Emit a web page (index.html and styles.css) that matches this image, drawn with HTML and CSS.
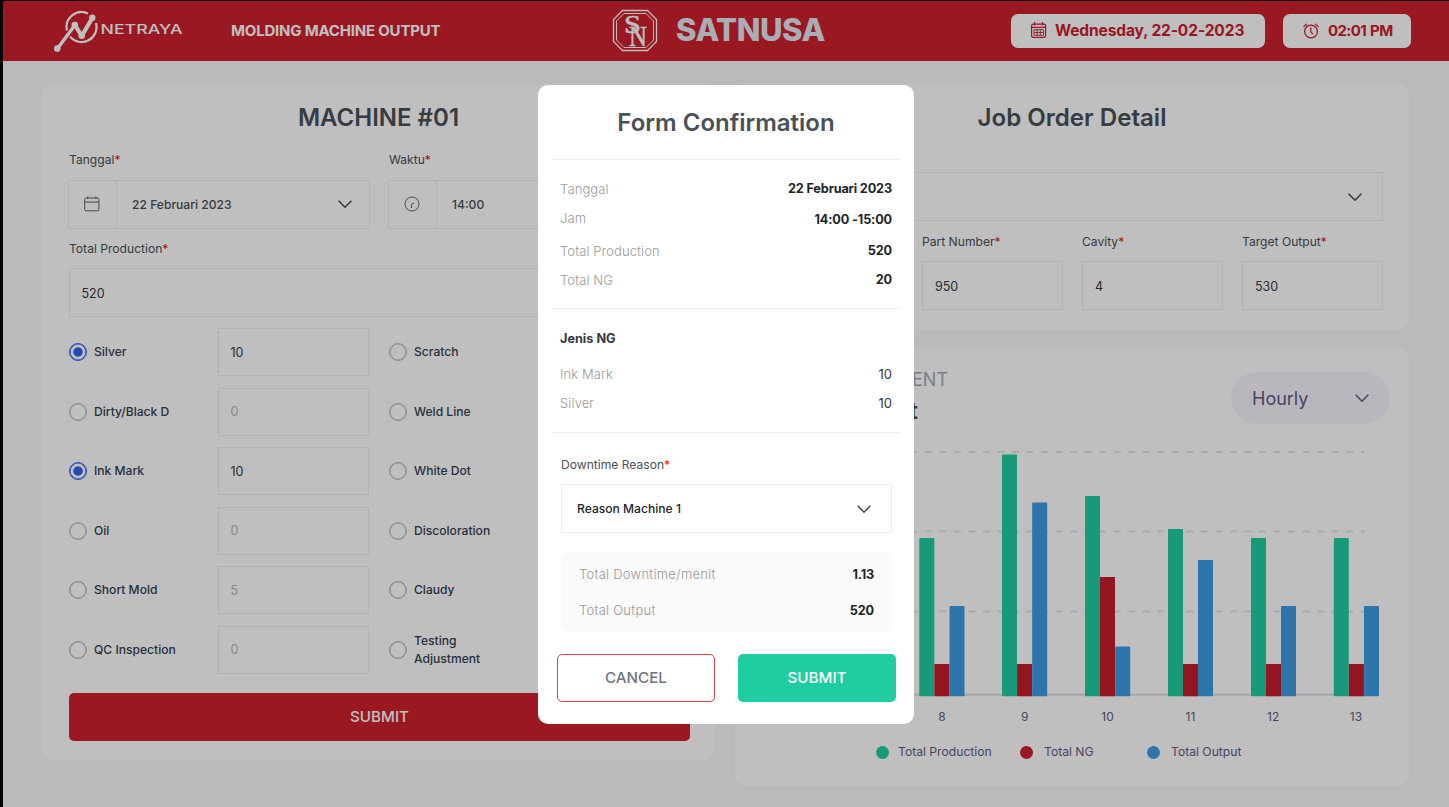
FILE: index.html
```html
<!DOCTYPE html>
<html lang="id">
<head>
<meta charset="utf-8">
<title>Molding Machine Output</title>
<link rel="stylesheet" href="styles.css">
</head>
<body>
<svg width="0" height="0" class="defs">
  <symbol id="chev" viewBox="0 0 14 8"><path d="M.6.8 7 7.2 13.4.8" fill="none" stroke="currentColor" stroke-width="1.5"/></symbol>
</svg>
<div class="app">
  <header class="topbar">
    <svg class="netraya" width="132" height="44" viewBox="52 9 132 44">
      <g fill="none" stroke="#fff">
        <path d="M67 30.500A15 15 0 0 1 88 13.5M96 23A15 15 0 0 1 70 36.600" stroke-width="2.200"/>
        <path d="M57.5 48.5 75 25" stroke-width="3.4"/>
        <path d="M75 25 81.7 36 92.300 18" stroke-width="4.2" stroke-linejoin="round"/>
      </g>
      <g fill="#fff"><circle cx="57.3" cy="48.6" r="3.3"/><circle cx="74.800" cy="25" r="3.3"/><circle cx="81.7" cy="35.8" r="3.2"/><circle cx="92.300" cy="17.8" r="3.2"/></g>
      <text x="100.5" y="33.500" textLength="82" lengthAdjust="spacingAndGlyphs" class="netraya-name">NETRAYA</text>
    </svg>
    <div class="app-name">MOLDING MACHINE OUTPUT</div>
    <div class="company">
      <svg width="46" height="44" viewBox="612 9 46 44">
        <g fill="none" stroke="#fff"><path d="M622.5 10.5h25l9 9v22l-9 9h-25l-9-9v-22z" stroke-width="1.3"/><path d="M624 13.5h22l7.500 7.500v19l-7.500 7.500h-22l-7.500-7.500v-19z" stroke-width="1"/></g>
        <text x="624" y="33" textLength="17" lengthAdjust="spacingAndGlyphs" class="seal seal-s">S</text><text x="629" y="45.700" textLength="18" lengthAdjust="spacingAndGlyphs" class="seal seal-n">N</text>
      </svg>
      <span>SATNUSA</span>
    </div>
    <div class="chip chip-date">
      <svg width="16" height="17" viewBox="0 0 16 17" fill="none" stroke="#cc212d"><rect x=".6" y="2.200" width="14" height="13.200" rx="1.600" stroke-width="1.200"/><path d="M.6 5.300h14M3.700 0v3.500M11.500 0v3.500" stroke-width="1.300"/><path d="M3 7.700h9.500v5.600H3zM3 10.500h9.500M6.200 7.700v5.600M9.300 7.700v5.600" stroke-width=".9"/></svg>
      <span>Wednesday, 22-02-2023</span>
    </div>
    <div class="chip chip-time">
      <svg width="16" height="16" viewBox="0 0 16 16" fill="none" stroke="#cc212d" stroke-width="1.200"><circle cx="8" cy="8.500" r="6.400"/><path d="M7.800 4.800v4l2 2M.8 3.600 3.500 1.200M12.500 1.200l2.700 2.400" stroke-linecap="round"/></svg>
      <span>02:01 PM</span>
    </div>
  </header>

  <main class="columns">
    <section class="card machine">
      <h2>MACHINE #01</h2>
      <div class="pair">
        <div>
          <label>Tanggal<i>*</i></label>
          <div class="field with-icon"><span class="cell"><svg width="16" height="16" viewBox="0 0 16 16" fill="none" stroke="#596069" stroke-width="1"><rect x=".7" y="2" width="14.200" height="12.800" rx="1.500"/><path d="M.7 6.100h14.200M3.700.5V3M11.900.5V3"/></svg></span><b>22 Februari 2023</b><svg class="chev" width="14" height="8"><use href="#chev"/></svg></div>
        </div>
        <div>
          <label>Waktu<i>*</i></label>
          <div class="field with-icon"><span class="cell"><svg width="16" height="16" viewBox="0 0 16 16" fill="none" stroke="#596069" stroke-width="1"><circle cx="8" cy="8" r="7"/><path d="M7.500 12V8.700Q7.600 7.200 10 7.200"/></svg></span><b>14:00</b><svg class="chev" width="14" height="8"><use href="#chev"/></svg></div>
        </div>
      </div>
      <label class="total-label">Total Production<i>*</i></label>
      <div class="field total">520</div>
      <div class="defects">
        <div class="radio on">Silver</div><div class="field">10</div><div class="radio">Scratch</div><div class="field off">0</div>
        <div class="radio">Dirty/Black D</div><div class="field off">0</div><div class="radio">Weld Line</div><div class="field off">0</div>
        <div class="radio on">Ink Mark</div><div class="field">10</div><div class="radio">White Dot</div><div class="field off">0</div>
        <div class="radio">Oil</div><div class="field off">0</div><div class="radio">Discoloration</div><div class="field off">0</div>
        <div class="radio">Short Mold</div><div class="field off">5</div><div class="radio">Claudy</div><div class="field off">0</div>
        <div class="radio">QC Inspection</div><div class="field off">0</div><div class="radio">Testing<br>Adjustment</div><div class="field off">0</div>
      </div>
      <div class="send">SUBMIT</div>
    </section>

    <div class="right">
      <section class="card order">
        <h2>Job Order Detail</h2>
        <div class="field job"><svg class="chev" width="14" height="8"><use href="#chev"/></svg></div>
        <div class="quad">
          <div><label>Part Name<i>*</i></label><div class="field"></div></div>
          <div><label>Part Number<i>*</i></label><div class="field">950</div></div>
          <div><label>Cavity<i>*</i></label><div class="field">4</div></div>
          <div><label>Target Output<i>*</i></label><div class="field">530</div></div>
        </div>
      </section>
      <section class="card stats">
        <div class="stats-head">
          <div class="stats-title"><span>ACHIEVEMENT</span><strong>Total Output</strong></div>
          <div class="pill">Hourly<svg width="14" height="8"><use href="#chev"/></svg></div>
        </div>
        <svg class="chart" width="674" height="290" viewBox="735 440 674 290">
          <path d="M765 452H1364.500M765 531.500H1364.500M765 611.500H1364.500" stroke="#e3e3ea" stroke-width="1.800" stroke-dasharray="6.900 7.630"/>
          <path d="M765 694.700H1379" stroke="#dcdce5" stroke-width="2"/>
          <g fill="#20cda2"><rect x="919.300" y="538" width="15" height="158.300" rx="1"/><rect x="1002" y="454.500" width="15" height="241.800" rx="1"/><rect x="1085" y="496" width="15" height="200.300" rx="1"/><rect x="1168" y="529" width="15" height="167.300" rx="1"/><rect x="1251" y="538" width="15" height="158.300" rx="1"/><rect x="1333.800" y="538" width="15" height="158.300" rx="1"/></g>
          <g fill="#c31d2b"><rect x="934.400" y="664" width="15" height="32.300"/><rect x="1017.100" y="664" width="15" height="32.300"/><rect x="1100" y="577" width="15" height="119.300"/><rect x="1183" y="664" width="15" height="32.300"/><rect x="1266" y="664" width="15" height="32.300"/><rect x="1348.900" y="664" width="15" height="32.300"/></g>
          <g fill="#3c9ce4"><rect x="949.500" y="606" width="15" height="90.300" rx="1"/><rect x="1032.200" y="502.600" width="15" height="193.700" rx="1"/><rect x="1115.200" y="646.500" width="15" height="49.800" rx="1"/><rect x="1198" y="560" width="15" height="136.300" rx="1"/><rect x="1281" y="606" width="15" height="90.300" rx="1"/><rect x="1364" y="606" width="15" height="90.300" rx="1"/></g>
          <g class="tick"><text x="942" y="721">8</text><text x="1024.700" y="721">9</text><text x="1107.500" y="721">10</text><text x="1190.400" y="721">11</text><text x="1273.200" y="721">12</text><text x="1356" y="721">13</text></g>
        </svg>
        <div class="legend"><span class="l1">Total Production</span><span class="l2">Total NG</span><span class="l3">Total Output</span></div>
      </section>
    </div>
  </main>

  <div class="overlay">
    <div class="modal">
      <h3>Form Confirmation</h3>
      <div class="block first">
        <p><span>Tanggal</span><b>22 Februari 2023</b></p>
        <p class="hour"><span>Jam</span><b>14:00 -15:00</b></p>
        <p><span>Total Production</span><b>520</b></p>
        <p><span>Total NG</span><b>20</b></p>
      </div>
      <div class="block second">
        <h4>Jenis NG</h4>
        <p><span>Ink Mark</span><em>10</em></p>
        <p><span>Silver</span><em>10</em></p>
      </div>
      <div class="block third">
        <label>Downtime Reason<i>*</i></label>
        <div class="field reason">Reason Machine 1<svg class="chev" width="14" height="8"><use href="#chev"/></svg></div>
        <div class="sum">
          <p><span>Total Downtime/menit</span><b>1.13</b></p>
          <p><span>Total Output</span><b>520</b></p>
        </div>
      </div>
      <div class="actions"><div class="cancel">CANCEL</div><div class="ok">SUBMIT</div></div>
    </div>
  </div>
</div>
</body>
</html>
```
FILE: styles.css
```css
*, ::before { box-sizing: border-box; margin: 0; padding: 0; }
body { width: 1449px; height: 807px; overflow: hidden; background: #000; padding: 1px 0 0 3px; font-family: Inter, sans-serif; }
.defs { position: absolute; }
.app { position: relative; height: 806px; background: #f7faf8; overflow: hidden; }

.topbar { height: 60px; background: #cc212d; color: #fff; display: flex; align-items: center; }
.netraya { margin-left: 49px; }
.netraya-name { font: 500 12.500px Inter, sans-serif; fill: #fff; }
.app-name { margin-left: 47px; width: 381px; font-weight: 700; font-size: 15px; letter-spacing: -.2px; white-space: nowrap; padding-bottom: 1px; }
.company { width: 399px; display: flex; align-items: center; gap: 18px; font-weight: 800; font-size: 31px; letter-spacing: -.4px; color: #e4e7f1; }
.company span { padding-bottom: 3px; }
.seal { font-family: "Liberation Serif", serif; font-weight: 400; letter-spacing: 0; fill: #fff; stroke: #fff; stroke-width: .5px; }
.seal-s { font-size: 26px; }
.seal-n { font-size: 28.500px; }
.chip { height: 34px; margin-bottom: 1px; background: #fff; border-radius: 7px; color: #cc212d; font-weight: 700; font-size: 15.500px; display: flex; align-items: center; white-space: nowrap; }
.chip svg { flex: none; }
.chip-date { width: 254px; padding-left: 20px; gap: 8px; letter-spacing: -.1px; }
.chip-time { width: 128px; margin-left: 18px; padding-left: 20px; gap: 9px; font-size: 15px; letter-spacing: -.6px; word-spacing: 1px; }

.columns { display: flex; gap: 20px; padding: 23px 0 0 39px; }
.card { background: #fff; border-radius: 12px; }
.machine { width: 673px; height: 676px; padding: 0 25px 0 27px; }
h2 { font-size: 24.100px; line-height: 32px; font-weight: 600; color: #495057; text-align: center; }
.machine h2 { padding-top: 18px; height: 66px; font-size: 24px; padding-right: 2px; }
label { display: block; font-size: 12.100px; line-height: 20px; color: #495057; }
label i { color: #f00; font-style: normal; }
.machine label { padding-top: 0; height: 20px; }
.machine .total-label { padding-top: 1px; }
.pair { display: grid; grid-template-columns: 302px 302px; gap: 18px; margin-left: -1px; }
.pair label { padding-left: 1px; }
.pair .field { margin: 10px 0 0 0; }
.field { height: 49px; border: 1px solid #efefef; display: flex; align-items: center; padding-left: 12px; font-size: 12.500px; color: #343a40; }
.machine .field { padding-left: 11.500px; }
.order .field { padding-top: 1px; }
.pair .with-icon { padding: 0; }
.with-icon .cell { width: 48px; height: 47px; border-right: 1px solid #f1f1f1; display: flex; align-items: center; justify-content: center; padding: 0 1px 1px 0; }
.with-icon b { font-weight: 500; margin-left: 15px; color: #495057; font-size: 12.100px; padding-bottom: 1px; }
.chev { margin-left: auto; margin-right: 17px; color: #444b53; }
.with-icon .chev { margin-bottom: 1px; }
.total { padding-top: 1px; }
.total-label { margin: 9px 0 10px; }
.defects { display: grid; grid-template-columns: 149px 151px 20px 149px 151px; grid-auto-rows: 48px; row-gap: 11.600px; margin-top: 11px; }
.defects > :nth-child(4n+3) { grid-column: 4; }
.defects > :nth-child(4n) { grid-column: 5; }
.defects .field { height: 48px; }
.field.off { color: #b5b5b5; }
.radio { display: flex; align-items: center; gap: 7px; font-size: 12.100px; line-height: 18px; font-weight: 500; color: #343f52; }
.radio::before { content: ""; width: 18px; height: 18px; flex: none; border: 1px solid #bdbdbd; box-shadow: inset 0 0 0 .6px #bdbdbd; border-radius: 50%; }
.radio.on::before { border-color: #2f63f0; box-shadow: inset 0 0 0 .6px #2f63f0; background: radial-gradient(circle, #2f63f0 4.300px, transparent 5px); }
.send { margin-top: 19px; height: 48px; border-radius: 5px; background: #cc212d; color: #fff; font-weight: 500; font-size: 15.200px; display: flex; align-items: center; justify-content: center; }

.order { width: 674px; height: 245px; padding: 18px 26px 0 27px; }
.order h2 { height: 70px; padding-right: 1px; }
.order .chev { margin-right: 20px; }
.quad { display: grid; grid-template-columns: repeat(4, 141px); gap: 19px; margin-top: 11px; }
.quad label { margin-bottom: 9px; }
.stats { width: 674px; height: 439px; margin-top: 18px; }
.stats-head { height: 93px; display: flex; justify-content: space-between; padding: 21px 19px 0 27px; }
.stats-title { width: 186px; display: flex; flex-direction: column; align-items: flex-end; }
.stats-title span { font-size: 18px; line-height: 24px; color: #a3abb3; }
.stats-title strong { font-size: 24px; font-weight: 600; line-height: 30px; color: #495057; margin: 4px 30px 0 0; }
.pill { margin-top: 4px; width: 159px; height: 52px; border-radius: 26px; background: #f7f5fd; color: #615c82; font-size: 18px; display: flex; align-items: center; justify-content: space-between; padding: 0 21px; }
.chart { display: block; }
.tick { font-size: 12px; fill: #615c82; text-anchor: middle; }
.legend { display: flex; padding-left: 141px; margin-top: 12px; font-size: 12.150px; line-height: 20px; color: #615c82; }
.legend span { display: flex; align-items: center; gap: 9px; white-space: nowrap; }
.legend span::before { content: ""; width: 13px; height: 13px; border-radius: 50%; background: #20cda2; }
.l1 { width: 144px; }
.l2 { width: 127px; }
.legend .l2, .legend .l3 { gap: 11px; }
.legend .l2::before { background: #cc212d; }
.legend .l3::before { background: #3c9ce4; }

.overlay { position: absolute; inset: 0; background: rgba(0, 0, 0, .25); display: flex; justify-content: center; align-items: flex-start; padding-top: 84px; }
.modal { width: 376px; height: 639px; background: #fff; border-radius: 10px; padding: 0 14px; }
h3 { height: 74px; padding-top: 22px; font-size: 24px; line-height: 31px; font-weight: 600; color: #495057; text-align: center; }
.block { border-top: 1px solid #eceff2; padding: 0 8px; }
.modal p { display: flex; justify-content: space-between; align-items: center; height: 29px; font-size: 13px; line-height: 20px; color: #999; }
.modal p span { font-weight: 300; letter-spacing: .1px; }
.modal b { font-weight: 700; font-size: 12.700px; color: #212529; letter-spacing: -.15px; padding-top: 1px; }
.modal em { font-style: normal; color: #343a40; }
.first { height: 149px; padding-top: 14px; }
.modal .hour { margin-bottom: 4px; }
.modal .hour b { padding-top: 4px; }
.second { height: 124px; padding-top: 20px; }
h4 { font-size: 12.700px; line-height: 20px; font-weight: 700; color: #343a40; margin-bottom: 10px; }
.third { height: 222px; padding: 22px 8px 0 9px; }
.reason { margin-top: 9px; padding-left: 15px; font-weight: 500; color: #212529; height: 49px; font-size: 12.100px; }
.reason .chev { margin-right: 20px; }
.sum { margin-top: 19px; height: 80px; border-radius: 8px; background: #fafafa; padding: 4px 18px; }
.modal .sum p { height: 36px; }
.modal .sum span { letter-spacing: .25px; }
.actions { display: flex; gap: 23px; padding: 0 4px 0 5px; }
.actions div { width: 158px; height: 48px; border-radius: 5px; font-size: 15.200px; font-weight: 500; display: flex; align-items: center; justify-content: center; padding-bottom: 1px; }
.cancel { border: 1px solid #d9434e; color: #6c757d; }
.ok { background: #20cda2; color: #fff; }
```
